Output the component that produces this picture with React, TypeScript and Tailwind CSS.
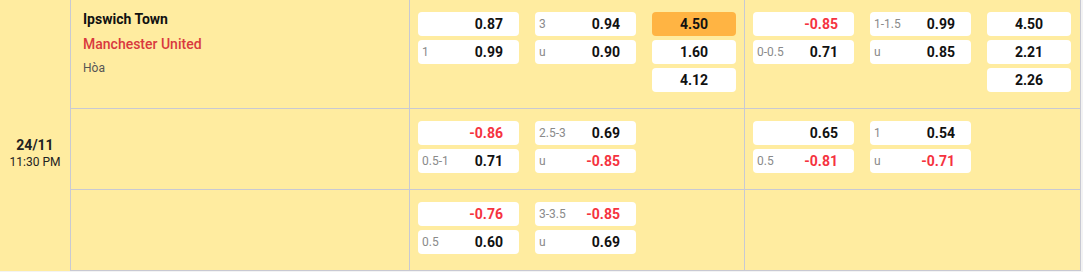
import React from 'react'

type Odd = { label?: string; value: string; red?: boolean }

const rows: { hdp: Odd[]; ou: Odd[]; x12?: string[]; hdp2: Odd[]; ou2: Odd[]; x122?: string[] }[] = [
  {
    hdp: [{ value: '0.87' }, { label: '1', value: '0.99' }],
    ou: [{ label: '3', value: '0.94' }, { label: 'u', value: '0.90' }],
    x12: ['4.50', '1.60', '4.12'],
    hdp2: [{ value: '-0.85', red: true }, { label: '0-0.5', value: '0.71' }],
    ou2: [{ label: '1-1.5', value: '0.99' }, { label: 'u', value: '0.85' }],
    x122: ['4.50', '2.21', '2.26'],
  },
  {
    hdp: [{ value: '-0.86', red: true }, { label: '0.5-1', value: '0.71' }],
    ou: [{ label: '2.5-3', value: '0.69' }, { label: 'u', value: '-0.85', red: true }],
    hdp2: [{ value: '0.65' }, { label: '0.5', value: '-0.81', red: true }],
    ou2: [{ label: '1', value: '0.54' }, { label: 'u', value: '-0.71', red: true }],
  },
  {
    hdp: [{ value: '-0.76', red: true }, { label: '0.5', value: '0.60' }],
    ou: [{ label: '3-3.5', value: '-0.85', red: true }, { label: 'u', value: '0.69' }],
    hdp2: [],
    ou2: [],
  },
]

function OddBox({ o }: { o: Odd }) {
  return (
    <div className="mb-1 flex h-6 w-[101px] items-center justify-between rounded bg-white pl-1 pr-4">
      <span className="text-[12px] text-[#8a8a8a]">{o.label ?? ''}</span>
      <span className={`text-[14px] font-bold ${o.red ? 'text-[#f5333f]' : 'text-[#111]'}`}>{o.value}</span>
    </div>
  )
}

function X12Box({ v, hot }: { v: string; hot?: boolean }) {
  return (
    <div
      className={`mb-1 flex h-6 w-[84px] items-center justify-center rounded text-[14px] font-bold text-[#111] ${
        hot ? 'bg-[#ffb443]' : 'bg-white'
      }`}
    >
      {v}
    </div>
  )
}

function Section({ hdp, ou, x12, wide }: { hdp: Odd[]; ou: Odd[]; x12?: string[]; wide?: boolean }) {
  return (
    <div className={`flex gap-4 border-r border-[#c8c9d3] py-3 pl-2 ${wide ? 'w-[336px]' : 'w-[335px]'}`}>
      <div className="w-[101px]">
        {hdp.map((o, i) => (
          <OddBox key={i} o={o} />
        ))}
      </div>
      <div className="w-[101px]">
        {ou.map((o, i) => (
          <OddBox key={i} o={o} />
        ))}
      </div>
      <div className="w-[84px]">
        {x12?.map((v, i) => (
          <X12Box key={i} v={v} hot={!wide && i === 0} />
        ))}
      </div>
    </div>
  )
}

export default function App() {
  return (
    <div className="h-[272px] w-[1083px] overflow-hidden bg-[#f3f3f3] font-['Roboto',sans-serif]">
      <div className="flex w-[1081px] bg-[#ffeca0]">
        {/* date */}
        <div className="w-[71px] border-r border-[#c8c9d3] pt-[136px] text-center">
          <div className="text-[14px] font-bold leading-[18px] text-[#222]">24/11</div>
          <div className="text-[12px] leading-4 text-[#222]">11:30 PM</div>
        </div>

        <div className="flex flex-col">
          {rows.map((r, i) => (
            <div key={i} className="flex border-b border-[#c8c9d3]">
              <div className="w-[339px] border-r border-[#c8c9d3] pl-3 pt-[10px]">
                {i === 0 && (
                  <>
                    <div className="text-[14px] font-bold leading-[18px] text-[#111]">Ipswich Town</div>
                    <div className="mt-[6px] text-[14px] font-medium leading-5 text-[#d9393e]">Manchester United</div>
                    <div className="mt-[6px] text-[12px] leading-4 text-[#555]">Hòa</div>
                  </>
                )}
              </div>
              <Section hdp={r.hdp} ou={r.ou} x12={r.x12} />
              <Section hdp={r.hdp2} ou={r.ou2} x12={r.x122} wide />
            </div>
          ))}
        </div>
      </div>
    </div>
  )
}
